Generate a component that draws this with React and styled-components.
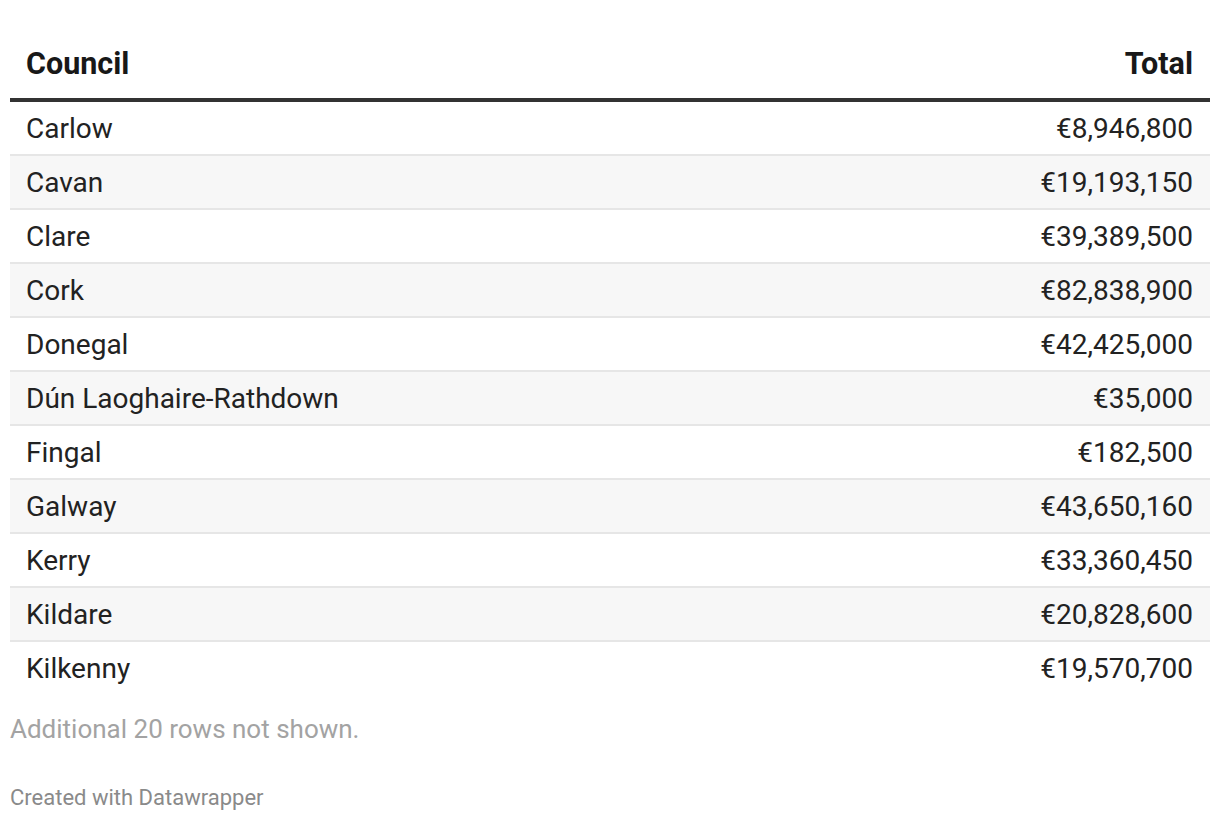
import styled, { createGlobalStyle } from "styled-components";

const GlobalStyle = createGlobalStyle`
    body {
        margin: 0;
        background: #ffffff;
        font-family: Roboto, "Liberation Sans", sans-serif;
    }
`;

const rows = [
    ["Carlow", "€8,946,800"],
    ["Cavan", "€19,193,150"],
    ["Clare", "€39,389,500"],
    ["Cork", "€82,838,900"],
    ["Donegal", "€42,425,000"],
    ["Dún Laoghaire-Rathdown", "€35,000"],
    ["Fingal", "€182,500"],
    ["Galway", "€43,650,160"],
    ["Kerry", "€33,360,450"],
    ["Kildare", "€20,828,600"],
    ["Kilkenny", "€19,570,700"],
];

const Page = styled.main`
    padding: 29px 10px 0;
`;

const Table = styled.div`
    display: flex;
    flex-direction: column;
`;

const HeadRow = styled.div`
    display: flex;
    justify-content: space-between;
    align-items: center;
    height: 69px;
    padding: 0 17px 0 16px;
    border-bottom: 4px solid #333333;
    font-size: 30.5px;
    font-weight: 700;
    color: #181818;
`;

const Row = styled.div`
    display: flex;
    justify-content: space-between;
    align-items: center;
    height: 52px;
    padding: 0 17px 0 16px;
    background: ${p => (p.$shaded ? "#f7f7f7" : "#ffffff")};
    border-bottom: ${p => (p.$last ? "none" : "2px solid #e6e6e6")};
    font-size: 28px;
    color: #222222;
`;

const Notes = styled.p`
    margin: 20px 0 0;
    font-size: 26px;
    line-height: 30px;
    color: #a3a3a3;
`;

const Credit = styled.p`
    margin: 41px 0 0;
    font-size: 22px;
    line-height: 26px;
    color: #8a8a8a;
`;

const App = () => (
    <Page>
        <GlobalStyle />
        <Table>
            <HeadRow>
                <span>Council</span>
                <span>Total</span>
            </HeadRow>
            {rows.map(([name, total], i) => (
                <Row key={name} $shaded={i % 2 === 1} $last={i === rows.length - 1}>
                    <span>{name}</span>
                    <span>{total}</span>
                </Row>
            ))}
        </Table>
        <Notes>Additional 20 rows not shown.</Notes>
        <Credit>Created with Datawrapper</Credit>
    </Page>
);

export default App;
